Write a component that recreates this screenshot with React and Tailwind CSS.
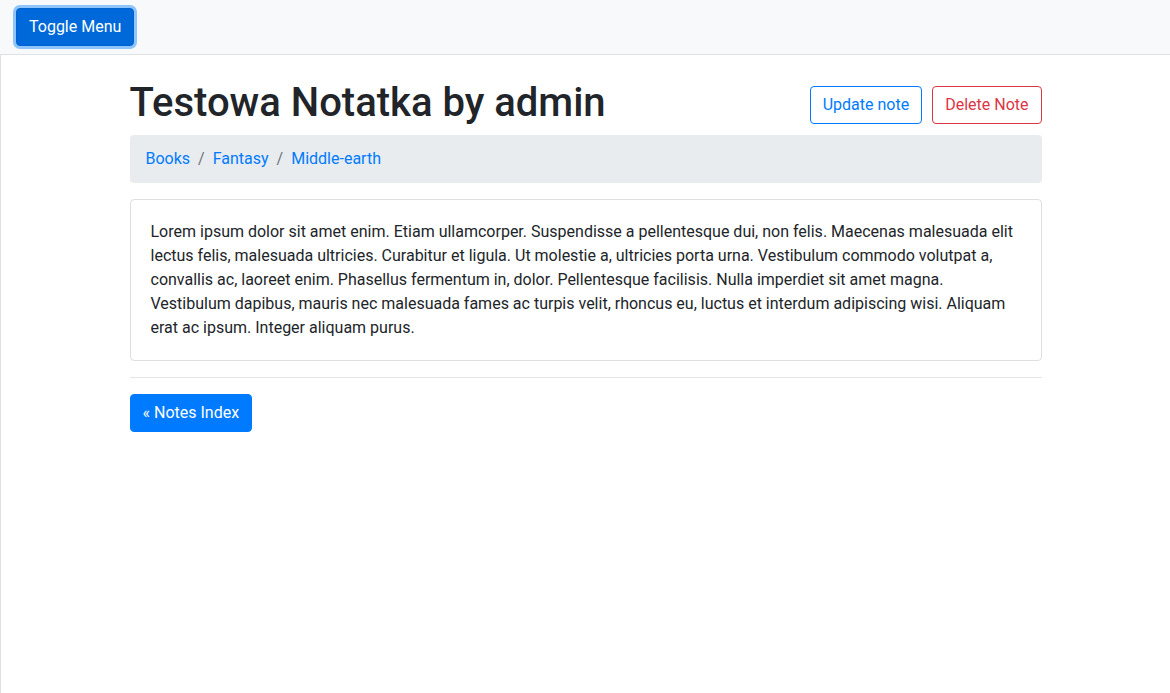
const breadcrumbs = ["Books", "Fantasy", "Middle-earth"];

const noteBody =
  "Lorem ipsum dolor sit amet enim. Etiam ullamcorper. Suspendisse a pellentesque dui, non felis. Maecenas malesuada elit lectus felis, malesuada ultricies. Curabitur et ligula. Ut molestie a, ultricies porta urna. Vestibulum commodo volutpat a, convallis ac, laoreet enim. Phasellus fermentum in, dolor. Pellentesque facilisis. Nulla imperdiet sit amet magna. Vestibulum dapibus, mauris nec malesuada fames ac turpis velit, rhoncus eu, luctus et interdum adipiscing wisi. Aliquam erat ac ipsum. Integer aliquam purus.";

const App = () => {
  return (
    <div className="min-h-screen bg-white font-['Roboto',sans-serif] text-base leading-6 text-[#212529]">
      <nav className="flex h-[55px] items-center border-b border-[#dee2e6] bg-[#f8f9fa] px-4">
        <button className="rounded border border-[#0062cc] bg-[#0069d9] px-3 py-1.5 text-base leading-6 text-white shadow-[0_0_0_3px_rgba(38,143,255,0.5)]">
          Toggle Menu
        </button>
      </nav>

      <div className="min-h-[638px] border-l border-[#dee2e6]">
        <main className="mx-auto w-[912px] pt-6">
          <header className="mb-2 flex items-center justify-between">
            <h1 className="text-[40px] font-medium leading-[48px]">
              Testowa Notatka by admin
            </h1>
            <div className="mt-1 flex gap-2.5">
              <button className="rounded border border-[#007bff] px-3 py-1.5 text-base leading-6 text-[#007bff]">
                Update note
              </button>
              <button className="rounded border border-[#dc3545] px-3 py-1.5 text-base leading-6 text-[#dc3545]">
                Delete Note
              </button>
            </div>
          </header>

          <ol className="mb-4 flex rounded bg-[#e9ecef] px-4 py-3">
            {breadcrumbs.map((crumb, index) => (
              <li key={crumb} className="flex">
                {index > 0 && (
                  <span className="px-2 text-[#6c757d]">/</span>
                )}
                <a href="#" className="text-[#007bff]">
                  {crumb}
                </a>
              </li>
            ))}
          </ol>

          <div className="rounded border border-[rgba(0,0,0,0.125)] p-5">
            <p>{noteBody}</p>
          </div>

          <hr className="my-4 border-t border-[rgba(0,0,0,0.1)]" />

          <a
            href="#"
            className="inline-block rounded border border-[#007bff] bg-[#007bff] px-3 py-1.5 text-base leading-6 text-white"
          >
            « Notes Index
          </a>
        </main>
      </div>
    </div>
  );
};

export default App;
